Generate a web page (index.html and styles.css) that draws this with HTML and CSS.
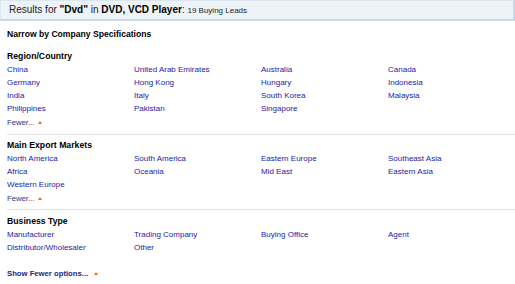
FILE: index.html
```html
<!DOCTYPE html>
<html lang="en">
<head>
    <meta charset="UTF-8">
    <title>Results for Dvd in DVD, VCD Player</title>
    <link rel="stylesheet" href="styles.css">
</head>
<body>
    <div class="results-bar">
        Results for <b>"Dvd"</b> in <b>DVD, VCD Player</b>: <span class="count">19 Buying Leads</span>
    </div>

    <div class="narrow">
        <h2 class="narrow-title">Narrow by Company Specifications</h2>

        <div class="spec">
            <h3>Region/Country</h3>
            <ul class="options">
                <li><a href="#">China</a></li>
                <li><a href="#">United Arab Emirates</a></li>
                <li><a href="#">Australia</a></li>
                <li><a href="#">Canada</a></li>
                <li><a href="#">Germany</a></li>
                <li><a href="#">Hong Kong</a></li>
                <li><a href="#">Hungary</a></li>
                <li><a href="#">Indonesia</a></li>
                <li><a href="#">India</a></li>
                <li><a href="#">Italy</a></li>
                <li><a href="#">South Korea</a></li>
                <li><a href="#">Malaysia</a></li>
                <li><a href="#">Philippines</a></li>
                <li><a href="#">Pakistan</a></li>
                <li><a href="#">Singapore</a></li>
            </ul>
            <a class="fewer" href="#">Fewer... <span class="arrow"></span></a>
        </div>

        <div class="spec">
            <h3>Main Export Markets</h3>
            <ul class="options">
                <li><a href="#">North America</a></li>
                <li><a href="#">South America</a></li>
                <li><a href="#">Eastern Europe</a></li>
                <li><a href="#">Southeast Asia</a></li>
                <li><a href="#">Africa</a></li>
                <li><a href="#">Oceania</a></li>
                <li><a href="#">Mid East</a></li>
                <li><a href="#">Eastern Asia</a></li>
                <li><a href="#">Western Europe</a></li>
            </ul>
            <a class="fewer" href="#">Fewer... <span class="arrow"></span></a>
        </div>

        <div class="spec spec-last">
            <h3>Business Type</h3>
            <ul class="options">
                <li><a href="#">Manufacturer</a></li>
                <li><a href="#">Trading Company</a></li>
                <li><a href="#">Buying Office</a></li>
                <li><a href="#">Agent</a></li>
                <li><a href="#">Distributor/Wholesaler</a></li>
                <li><a href="#">Other</a></li>
            </ul>
        </div>

        <a class="show-fewer" href="#">Show Fewer options... <span class="arrow"></span></a>
    </div>
</body>
</html>
```

FILE: styles.css
```css
body {
    margin: 0;
    font-family: "Liberation Sans", Arial, sans-serif;
    background-color: #fff;
    color: #000;
}
.results-bar {
    height: 18px;
    line-height: 18px;
    padding-left: 8px;
    background-color: #eef3f8;
    border: 1px solid #dbe7f0;
    border-right: 2px solid #c6dae9;
    border-bottom: 2px solid #c6dae9;
    font-size: 10px;
    color: #222;
}
.results-bar b {
    color: #000;
}
.results-bar .count {
    font-size: 8px;
}
.narrow {
    padding-left: 7px;
}
.narrow-title {
    margin: 6px 0 0;
    font-size: 8.6px;
    line-height: 14px;
}
.spec {
    padding: 4px 0 4px;
    border-top: 1px solid #e4e4e4;
}
.spec:first-of-type {
    margin-top: 9px;
    padding: 0 0 5px;
    border-top: none;
}
.spec-last {
    padding: 5px 0 0;
}
.spec h3 {
    margin: 0;
    font-size: 8.7px;
    line-height: 13px;
}
.options {
    display: grid;
    grid-template-columns: repeat(4, 127px);
    margin: 0;
    padding: 0;
    list-style: none;
}
.options li {
    font-size: 8px;
    line-height: 13px;
    white-space: nowrap;
}
.options a {
    color: #1b1ba6;
    text-decoration: none;
}
.fewer {
    display: block;
    margin-top: 1px;
    font-size: 7.7px;
    line-height: 13px;
    color: #1f3391;
    text-decoration: none;
}
.arrow {
    display: inline-block;
    width: 0;
    height: 0;
    margin-left: 2px;
    vertical-align: 1px;
    border-left: 2.5px solid transparent;
    border-right: 2.5px solid transparent;
    border-bottom: 3px solid #f26a10;
}
.show-fewer {
    display: block;
    margin-top: 13px;
    font-size: 7.7px;
    font-weight: bold;
    line-height: 13px;
    color: #1a2680;
    text-decoration: none;
}
.show-fewer .arrow {
    margin-left: 4px;
}
```
